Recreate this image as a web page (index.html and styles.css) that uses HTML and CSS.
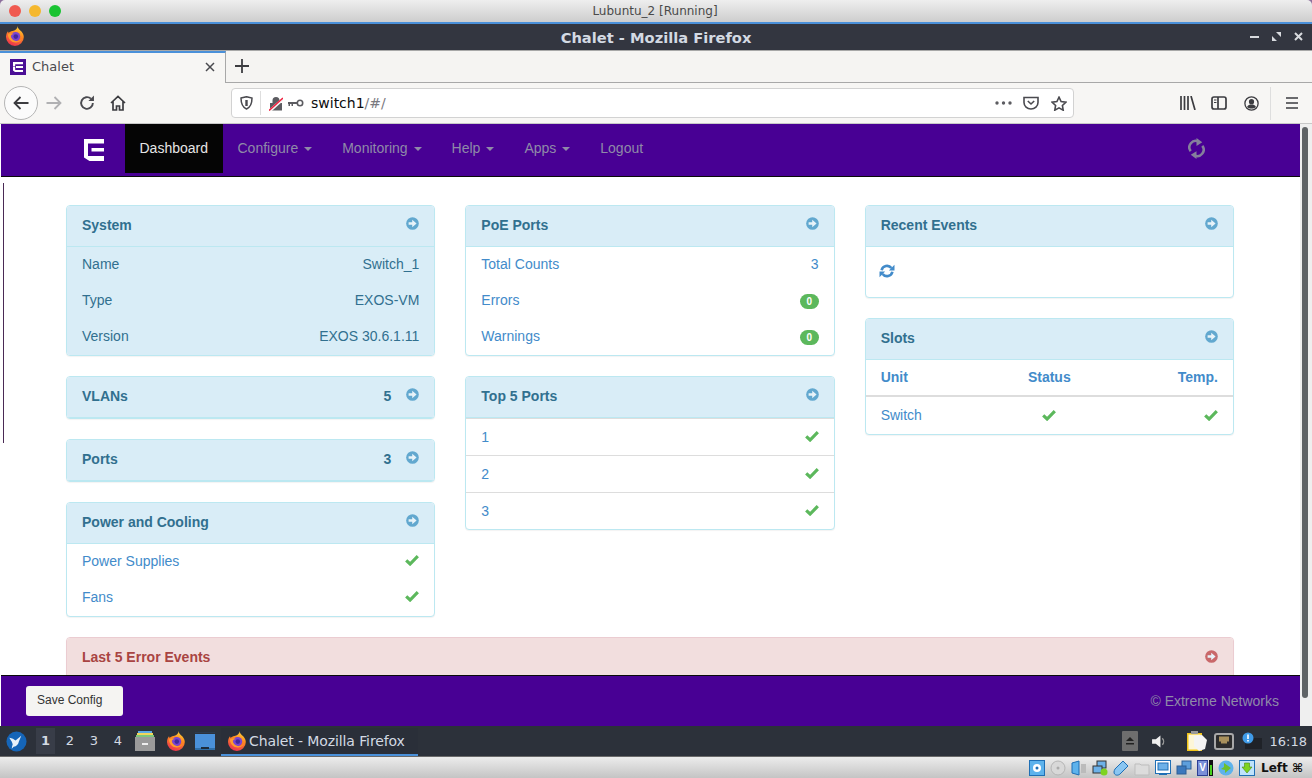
FILE: index.html
```html
<!DOCTYPE html>
<html lang="en">
<head>
  <meta charset="UTF-8" />
  <title>Chalet - Mozilla Firefox</title>
  <link rel="stylesheet" href="styles.css">
</head>
<body>
  <svg class="defs" width="0" height="0">
    <defs>
      <linearGradient id="fxBody" x1="0.7" y1="0" x2="0.3" y2="1">
        <stop offset="0" stop-color="#ffd83b"/>
        <stop offset="0.4" stop-color="#ff8a1f"/>
        <stop offset="1" stop-color="#ec2f52"/>
      </linearGradient>
      <symbol id="firefox" viewBox="0 0 20 20">
        <path d="M12.800 0c-.2 1.800.8 3 2.200 4.300 2.100 1.700 3.800 3.900 3.800 6.700a8.900 8.900 0 1 1-17.800 0c0-2.300.8-4.300 2-5.800l.6 1.900c1-1.300 2.300-1.800 3.800-2.100 2.600-.6 5-1.900 5.400-5z" fill="url(#fxBody)"/>
        <circle cx="10.600" cy="10.600" r="4.600" fill="#7a45cf"/>
        <circle cx="10.800" cy="10.600" r="2.300" fill="#43289e"/>
        <path d="M2.800 8.500c.6 5 4 8.200 8.400 8 2.600-.1 4.800-1.600 5.800-3.900-1.600 1.900-4 2.900-6.300 2.500-3-.5-4.900-2.800-5-5.500.6-1 1.700-1.600 3-1.700-1.800-.9-4.700-.4-5.900.6z" fill="#ff9c2e"/>
      </symbol>
      <symbol id="go" viewBox="0 0 14 14">
        <circle cx="7" cy="7" r="6.800" fill="currentColor"/>
        <path d="M2.800 5.600h3.900V3L11.400 7l-4.700 4V8.400H2.800z" fill="#e8f3f9"/>
      </symbol>
      <symbol id="ok" viewBox="0 0 14 11">
        <path d="M1.200 5.400l3.900 3.600 7.700-7.800" fill="none" stroke="currentColor" stroke-width="3.200"/>
      </symbol>
      <symbol id="spin" viewBox="0 0 16 14">
        <path d="M2.600 6.200a5.500 5.500 0 0 1 9.800-2.100" fill="none" stroke="currentColor" stroke-width="2.600"/>
        <path d="M15.500 0.800v5.600H9.900z" fill="currentColor"/>
        <path d="M13.400 7.800a5.500 5.500 0 0 1-9.800 2.100" fill="none" stroke="currentColor" stroke-width="2.600"/>
        <path d="M.5 13.200V7.600h5.600z" fill="currentColor"/>
      </symbol>
      <symbol id="extreme" viewBox="0 0 20 22">
        <path d="M0 0h20v4.500H4v5H0z M7.500 9h12.500v3.600H7.500z M0 9.500h4v7.500h16v5H5.500L0 18.500z" fill="currentColor"/>
      </symbol>
    </defs>
  </svg>

  <div class="window">
    <div class="titlebar">
      <div class="lights">
        <span class="light red"></span>
        <span class="light amber"></span>
        <span class="light green"></span>
      </div>
      <span>Lubuntu_2 [Running]</span>
    </div>

    <div class="wmbar">
      <svg class="wm-logo"><use href="#firefox"/></svg>
      <span class="wm-title">Chalet - Mozilla Firefox</span>
      <div class="wm-btns">
        <svg width="9" height="9" viewBox="0 0 9 9"><path d="M0 4h9v2H0z" fill="#d8dade"/></svg>
        <svg width="9" height="9" viewBox="0 0 9 9"><path d="M4 0h5v5z M0 4l5 5H0z" fill="#d8dade"/></svg>
        <svg width="9" height="9" viewBox="0 0 9 9"><path d="M1 1l7 7M8 1L1 8" stroke="#d8dade" stroke-width="2"/></svg>
      </div>
    </div>

    <div class="tabbar">
      <div class="tab">
        <svg class="favicon" viewBox="0 0 16 16"><rect width="16" height="16" fill="#4b0f96"/><path d="M3 3h10v2.200H5.200V7H3z M6 7h7v2H6z M3 7.500h2.200V11H13v2H5l-2-1.600z" fill="#fff"/></svg>
        <span class="tab-label">Chalet</span>
        <svg class="tab-close" width="10" height="10" viewBox="0 0 10 10"><path d="M1 1l8 8M9 1L1 9" stroke="#4a4a4f" stroke-width="1.500"/></svg>
      </div>
      <div class="newtab">
        <svg width="14" height="14" viewBox="0 0 14 14"><path d="M7 0v14M0 7h14" stroke="#3c3c40" stroke-width="1.800"/></svg>
      </div>
    </div>

    <div class="toolbar">
      <div class="backbtn">
        <svg width="16" height="14" viewBox="0 0 16 14"><path d="M15.500 7H2M7.500 1L1.500 7l6 6" fill="none" stroke="#3c3c40" stroke-width="1.800"/></svg>
      </div>
      <svg class="tb-forward" width="16" height="14" viewBox="0 0 16 14"><path d="M.5 7H14M8.500 1l6 6-6 6" fill="none" stroke="#b1b1b3" stroke-width="1.800"/></svg>
      <svg class="tb-reload" width="16" height="16" viewBox="0 0 15 15"><path d="M13 7.500a5.500 5.500 0 1 1-1.800-4.100" fill="none" stroke="#4a4a4f" stroke-width="1.800"/><path d="M14 .5v5.200H8.800z" fill="#4a4a4f"/></svg>
      <svg class="tb-home" width="16" height="16" viewBox="0 0 16 16"><path d="M1 8l7-6.500L15 8M3 6.500V15h3.500v-4h3v4H13V6.500" fill="none" stroke="#3c3c40" stroke-width="1.700"/></svg>

      <div class="urlbar">
        <svg class="url-shield" width="13" height="14" viewBox="0 0 13 14"><path d="M1 2l5.500-1.300L12 2c0 5-1 9-5.500 11C2 11 1 7 1 2z" fill="none" stroke="#4a4a4f" stroke-width="1.500"/><path d="M6.500 4v6" stroke="#4a4a4f" stroke-width="2.400"/></svg>
        <span class="url-sep"></span>
        <svg class="url-lock" width="14" height="15" viewBox="0 0 14 15"><path d="M3.500 7V4.500a3.500 3.500 0 0 1 7 0V7H13v7.500H1V7z" fill="#5c5c61"/><path d="M0 15.500L14 3" stroke="#f7f6f4" stroke-width="3"/><path d="M0 14.500L14 2" stroke="#f0203f" stroke-width="1.500"/></svg>
        <svg class="url-key" width="16" height="8" viewBox="0 0 16 8"><circle cx="12" cy="4" r="2.700" fill="none" stroke="#5c5c61" stroke-width="1.600"/><path d="M0 3h9v2H5v2H3.500V5H2v2H.5V5H0z" fill="#5c5c61"/></svg>
        <span class="url-text">switch1<span class="url-dim">/#/</span></span>
        <svg class="url-dots" width="17" height="4" viewBox="0 0 17 4"><circle cx="2" cy="2" r="1.700" fill="#5c5c61"/><circle cx="8.500" cy="2" r="1.700" fill="#5c5c61"/><circle cx="15" cy="2" r="1.700" fill="#5c5c61"/></svg>
        <svg class="url-pocket" width="16" height="14" viewBox="0 0 16 14"><path d="M1 1.500h14v5a7 6.500 0 0 1-14 0z" fill="none" stroke="#4a4a4f" stroke-width="1.600"/><path d="M4.800 5l3.200 3 3.200-3" fill="none" stroke="#4a4a4f" stroke-width="1.600"/></svg>
        <svg class="url-star" width="16" height="15" viewBox="0 0 16 15"><path d="M8 1.200l2.100 4.300 4.700.7-3.400 3.300.8 4.700L8 11.900l-4.200 2.300.8-4.700L1.200 6.200l4.700-.7z" fill="none" stroke="#4a4a4f" stroke-width="1.600"/></svg>
      </div>

      <div class="tb-right">
        <svg class="tb-library" width="16" height="14" viewBox="0 0 16 14"><path d="M1 0v14M4.500 0v14M8 0v14M11 0l4 14" fill="none" stroke="#3c3c40" stroke-width="1.700"/></svg>
        <svg class="tb-sidebar" width="16" height="14" viewBox="0 0 16 14"><rect x="1" y="1" width="14" height="12" rx="2" fill="none" stroke="#3c3c40" stroke-width="1.700"/><path d="M7 1v12" stroke="#3c3c40" stroke-width="1.700"/><path d="M3 4h2.500M3 6.500h2.500" stroke="#3c3c40" stroke-width="1"/></svg>
        <svg class="tb-profile" width="15" height="15" viewBox="0 0 15 15"><circle cx="7.500" cy="7.500" r="6.600" fill="none" stroke="#3c3c40" stroke-width="1.300"/><circle cx="7.500" cy="5.700" r="2.600" fill="#3c3c40"/><path d="M3 11c1-2 2.500-2.500 4.500-2.500S11 9 12 11c-2.500 2-6.500 2-9 0z" fill="#3c3c40"/></svg>
        <span class="tb-sep"></span>
        <svg width="12" height="12" viewBox="0 0 12 12"><path d="M0 1h12M0 6h12M0 11h12" stroke="#3c3c40" stroke-width="1.700"/></svg>
      </div>
    </div>

    <div class="app">
      <div class="page">
        <nav class="appnav">
          <svg class="appnav-logo"><use href="#extreme"/></svg>
          <ul class="appnav-menu">
            <li class="active">Dashboard</li>
            <li>Configure<i class="caret"></i></li>
            <li>Monitoring<i class="caret"></i></li>
            <li>Help<i class="caret"></i></li>
            <li>Apps<i class="caret"></i></li>
            <li>Logout</li>
          </ul>
          <svg class="appnav-sync" viewBox="0 0 16 20"><path d="M2.500 12.500A6 6 0 0 1 10 3.500" fill="none" stroke="currentColor" stroke-width="2.400"/><path d="M8 0l5.500 4L8 7.500z" fill="currentColor"/><path d="M13.500 7.500A6 6 0 0 1 6 16.500" fill="none" stroke="currentColor" stroke-width="2.400"/><path d="M8 20l-5.500-4L8 12.500z" fill="currentColor"/></svg>
        </nav>

        <main class="dash">
          <span class="edge-line"></span>
          <div class="dash-grid">
            <div class="col">
              <section class="panel">
                <header class="panel-head"><h3>System</h3><svg class="go"><use href="#go"/></svg></header>
                <div class="panel-body info">
                  <div class="row"><span>Name</span><span>Switch_1</span></div>
                  <div class="row"><span>Type</span><span>EXOS-VM</span></div>
                  <div class="row"><span>Version</span><span>EXOS 30.6.1.11</span></div>
                </div>
              </section>
              <section class="panel">
                <header class="panel-head"><h3>VLANs</h3><b class="count">5</b><svg class="go"><use href="#go"/></svg></header>
              </section>
              <section class="panel">
                <header class="panel-head"><h3>Ports</h3><b class="count">3</b><svg class="go"><use href="#go"/></svg></header>
              </section>
              <section class="panel">
                <header class="panel-head"><h3>Power and Cooling</h3><svg class="go"><use href="#go"/></svg></header>
                <div class="panel-body">
                  <div class="row"><span>Power Supplies</span><svg class="ok"><use href="#ok"/></svg></div>
                  <div class="row"><span>Fans</span><svg class="ok"><use href="#ok"/></svg></div>
                </div>
              </section>
            </div>

            <div class="col">
              <section class="panel">
                <header class="panel-head"><h3>PoE Ports</h3><svg class="go"><use href="#go"/></svg></header>
                <div class="panel-body">
                  <div class="row"><span>Total Counts</span><span>3</span></div>
                  <div class="row"><span>Errors</span><span class="badge">0</span></div>
                  <div class="row"><span>Warnings</span><span class="badge">0</span></div>
                </div>
              </section>
              <section class="panel">
                <header class="panel-head"><h3>Top 5 Ports</h3><svg class="go"><use href="#go"/></svg></header>
                <div class="list-row"><span>1</span><svg class="ok"><use href="#ok"/></svg></div>
                <div class="list-row"><span>2</span><svg class="ok"><use href="#ok"/></svg></div>
                <div class="list-row"><span>3</span><svg class="ok"><use href="#ok"/></svg></div>
              </section>
            </div>

            <div class="col">
              <section class="panel">
                <header class="panel-head"><h3>Recent Events</h3><svg class="go"><use href="#go"/></svg></header>
                <div class="events"><svg class="spin"><use href="#spin"/></svg></div>
              </section>
              <section class="panel">
                <header class="panel-head"><h3>Slots</h3><svg class="go"><use href="#go"/></svg></header>
                <div class="slots slots-head"><span>Unit</span><span>Status</span><span>Temp.</span></div>
                <div class="slots"><span>Switch</span><span><svg class="ok"><use href="#ok"/></svg></span><span><svg class="ok"><use href="#ok"/></svg></span></div>
              </section>
            </div>
          </div>

          <section class="panel danger">
            <header class="panel-head"><h3>Last 5 Error Events</h3><svg class="go"><use href="#go"/></svg></header>
          </section>
        </main>

        <footer class="appfoot">
          <button class="save">Save Config</button>
          <span class="copy">© Extreme Networks</span>
        </footer>
      </div>
      <div class="scroll"><span class="scroll-thumb"></span></div>
    </div>

    <div class="taskbar">
      <svg class="tk-start" viewBox="0 0 22 22"><circle cx="11" cy="11" r="10.500" fill="#1565b8"/><path d="M3.500 7c3 .5 5 1.500 6.500 3l6-5-2.500 6c-.5 3-2.500 5-5.500 5.500l-2 2 .5-3C8 14 6 11 3.500 7z" fill="#e8f1fa"/></svg>
      <span class="desk current">1</span>
      <span class="desk">2</span>
      <span class="desk">3</span>
      <span class="desk">4</span>
      <svg class="tk-files" viewBox="0 0 20 20"><path d="M3 0h14v2H3z" fill="#5aa9e6"/><path d="M2 2h16v2H2z" fill="#f1d65b"/><path d="M1 4h18v2H1z" fill="#7cc67c"/><path d="M0 6h20v14H0z" fill="#9a9a9a"/><path d="M7 12h6v2H7z" fill="#eee"/></svg>
      <svg class="tk-fox"><use href="#firefox"/></svg>
      <svg class="tk-desk" viewBox="0 0 20 18"><path d="M0 0h20v1H0z" fill="#2c3a4d"/><path d="M0 2h20v14H0z" fill="#4a90d9"/><path d="M0 16h20v2H0z" fill="#2f6ea8"/><path d="M6 15h8v2H6z" fill="#1d2a3a"/></svg>
      <div class="tk-task">
        <svg class="tk-fox"><use href="#firefox"/></svg>
        <span>Chalet - Mozilla Firefox</span>
      </div>
      <div class="tk-tray">
        <svg class="tray-eject" viewBox="0 0 16 20"><rect width="16" height="20" rx="1" fill="#6e6e6e"/><path d="M8 6l4 4H4z M4 12h8v1.500H4z" fill="#222"/></svg>
        <svg class="tray-vol" viewBox="0 0 16 14"><path d="M0 4.500h4L9 .5v13l-5-4H0z" fill="#f0f0f0"/><path d="M11 3.500a5 5 0 0 1 0 7" fill="none" stroke="#999" stroke-width="1.500"/></svg>
        <svg class="tray-clip" viewBox="0 0 20 20"><rect x="0" y="2" width="15" height="18" fill="#f0c419"/><rect x="1.500" y="3.500" width="12" height="15" fill="#fdf6d8"/><rect x="4" y="0" width="7" height="3" fill="#999"/><path d="M7 5l8-1 5 5-2 9-6 2-5-5z" fill="#f4f4f4"/></svg>
        <svg class="tray-net" viewBox="0 0 20 17"><rect x="1" y="1" width="18" height="15" rx="2" fill="#2c2c2c" stroke="#a8a8a8" stroke-width="2"/><path d="M5 3.500h10v5h-2v2H7v-2H5z" fill="#a8905c"/></svg>
        <svg class="tray-note" viewBox="0 0 20 18"><rect x="3" y="6" width="17" height="11" fill="#1f2228"/><circle cx="6" cy="6" r="5.500" fill="#3f9be8"/><path d="M5.200 2.500h1.600v4.500H5.200z M5.200 8h1.600v1.500H5.200z" fill="#fff"/></svg>
        <span class="clock">16:18</span>
      </div>
    </div>

    <div class="vboxbar">
      <svg class="vb" viewBox="0 0 16 16"><rect x=".5" y=".5" width="15" height="15" fill="#5db2ec" stroke="#1f6fb5"/><circle cx="8" cy="8" r="4" fill="#fff"/><circle cx="8" cy="8" r="1.500" fill="#1f6fb5"/></svg>
      <svg class="vb" viewBox="0 0 16 16"><circle cx="8" cy="8" r="7" fill="#d8d8d8" stroke="#b5b5b5"/><circle cx="8" cy="8" r="1.500" fill="#aaa"/></svg>
      <svg class="vb" viewBox="0 0 16 16"><path d="M1 3l7-2v14l-7-2z" fill="#5db2ec" stroke="#1f6fb5"/><path d="M10 4h5v9h-5z" fill="#bbb"/></svg>
      <svg class="vb" viewBox="0 0 16 16"><rect x="5" y="1" width="9" height="7" fill="#6db1e8" stroke="#333"/><rect x="1" y="6" width="9" height="7" fill="#6db1e8" stroke="#333"/><circle cx="12" cy="12" r="3.500" fill="#7ed321"/></svg>
      <svg class="vb" viewBox="0 0 16 16"><path d="M10 1l5 5-8 8c-2 2-6 1.500-6-2 0-1 .5-2 1-3z" fill="#8ac6f2" stroke="#1f6fb5"/></svg>
      <svg class="vb" viewBox="0 0 16 16"><path d="M1 4h5l1 1h8v10H1z" fill="#dcdcdc" stroke="#bdbdbd"/></svg>
      <svg class="vb" viewBox="0 0 16 16"><rect x=".5" y=".5" width="15" height="13" fill="#fff" stroke="#1f6fb5"/><rect x="3" y="3" width="10" height="7" fill="#6db1e8" stroke="#1f6fb5"/><path d="M4 14.500h8" stroke="#1f6fb5"/></svg>
      <svg class="vb" viewBox="0 0 16 16"><rect x="6" y="1" width="9" height="8" fill="#5e9fdc" stroke="#2c5f96"/><rect x="1" y="6" width="9" height="8" fill="#3b78bd" stroke="#2c5f96"/></svg>
      <span class="vb-v"><span class="vb-v-in">V</span><i></i></span>
      <svg class="vb" viewBox="0 0 16 16"><circle cx="8" cy="8" r="7.500" fill="#5db2ec"/><path d="M6 3l7 5-6 5V10L3 9l3-2z" fill="#6ec02c"/></svg>
      <svg class="vb" viewBox="0 0 16 16"><rect x=".5" y=".5" width="15" height="15" fill="#bfe3fb" stroke="#1f6fb5"/><path d="M5.500 3h5v4H13l-5 6-5-6h2.500z" fill="#7ed321" stroke="#4a8a10" stroke-width=".6"/></svg>
      <span class="vb-key">Left ⌘</span>
    </div>
  </div>
</body>
</html>
```

FILE: styles.css
```css
* {
  box-sizing: border-box;
}
html, body {
  margin: 0;
  height: 100%;
  overflow: hidden;
}
body {
  background-color: #8c6f9c;
  font-family: "Liberation Sans", Arial, sans-serif;
  font-size: 14px;
}
.defs {
  position: absolute;
}
.window {
  display: flex;
  flex-direction: column;
  width: 1312px;
  height: 778px;
  overflow: hidden;
  border-radius: 5px 5px 0 0;
}

/* host title bar */
.titlebar {
  position: relative;
  display: flex;
  align-items: center;
  justify-content: center;
  flex: 0 0 22px;
  padding-right: 2px;
  background: linear-gradient(#eeeeee, #cdcdcd);
  color: #4a4a4a;
  font-family: "DejaVu Sans", sans-serif;
  font-size: 12px;
}
.lights {
  position: absolute;
  left: 9px;
  top: 5px;
  display: flex;
  gap: 8px;
}
.light {
  width: 12px;
  height: 12px;
  border-radius: 50%;
}
.light.red { background-color: #f05a50; }
.light.amber { background-color: #f5b82e; }
.light.green { background-color: #19c332; }

/* guest window bar */
.wmbar {
  position: relative;
  display: flex;
  align-items: center;
  justify-content: center;
  flex: 0 0 28px;
  background-color: #333640;
  border-top: 2px solid #4a90d9;
  color: #d3dae3;
}
.wm-logo {
  position: absolute;
  left: 5px;
  top: 2px;
  width: 20px;
  height: 20px;
}
.wm-title {
  font-family: "DejaVu Sans", sans-serif;
  font-weight: 700;
  font-size: 14.670px;
}
.wm-btns {
  position: absolute;
  right: 9px;
  top: 8px;
  display: flex;
  gap: 13px;
}

/* firefox chrome */
.tabbar {
  display: flex;
  flex: 0 0 33px;
  background-color: #f5f4f2;
  border-top: 1px solid #a8a8a8;
  border-bottom: 1px solid #a8a8a8;
}
.tab {
  display: flex;
  align-items: center;
  width: 226px;
  height: 32px;
  margin-bottom: -1px;
  padding: 0 10px 2px;
  background-color: #f7f6f4;
  border-top: 2px solid #4a90d9;
  border-right: 1px solid #a8a8a8;
}
.favicon {
  width: 16px;
  height: 16px;
  margin-right: 6px;
}
.tab-label {
  flex: 1;
  margin-bottom: 2px;
  color: #4a4a4f;
  font-family: "DejaVu Sans", sans-serif;
  font-size: 13px;
}
.newtab {
  display: flex;
  align-items: center;
  height: 30px;
  padding-left: 9px;
}
.toolbar {
  display: flex;
  align-items: center;
  flex: 0 0 41px;
  padding-left: 4px;
  background-color: #f7f6f4;
  border-bottom: 1px solid #c8c8c8;
}
.backbtn {
  display: flex;
  align-items: center;
  justify-content: center;
  width: 34px;
  height: 34px;
  border: 1px solid #b5b5b5;
  border-radius: 50%;
  background-color: #fbfbfb;
}
.tb-forward {
  margin-left: 8px;
}
.tb-reload {
  margin-left: 17px;
}
.tb-home {
  margin-left: 15px;
}
.urlbar {
  display: flex;
  align-items: center;
  width: 843px;
  height: 30px;
  margin-left: 105px;
  padding: 0 6px 0 8px;
  background-color: #fff;
  border: 1px solid #d2d2d2;
  border-radius: 4px;
  color: #0c0c0d;
  font-family: "DejaVu Sans", sans-serif;
  font-size: 14px;
}
.url-sep {
  width: 1px;
  height: 24px;
  margin: 0 8px 0 7px;
  background-color: #dedede;
}
.url-key {
  margin: 0 7px 0 5px;
}
.url-text {
  flex: 1;
  margin-bottom: 1px;
}
.url-dim {
  color: #7a7a7f;
}
.url-dots {
  margin-right: 11px;
}
.url-pocket {
  margin-right: 12px;
}
.tb-right {
  display: flex;
  align-items: center;
  margin-left: 106px;
}
.tb-sidebar {
  margin-left: 15px;
}
.tb-profile {
  margin-left: 17px;
}
.tb-sep {
  width: 1px;
  height: 33px;
  margin: 0 15px 0 11px;
  background-color: #dedede;
}

/* app area */
.app {
  display: flex;
  flex: 1;
  min-height: 0;
  padding-left: 1px;
  background-color: #fff;
}
.page {
  display: flex;
  flex-direction: column;
  flex: 1;
  min-width: 0;
}
.scroll {
  flex: 0 0 12px;
  padding: 3px 0 0 2px;
  background-color: #efefef;
}
.scroll-thumb {
  display: block;
  width: 6px;
  height: 571px;
  border-radius: 3px;
  background-color: #5f6366;
}
.appnav {
  display: flex;
  align-items: flex-start;
  flex: 0 0 53px;
  background-color: #480094;
  border-bottom: 1px solid #0a0a0a;
  color: #fff;
}
.appnav-logo {
  flex: none;
  width: 20px;
  height: 22px;
  margin: 15px 21px 0 83px;
  color: #fff;
}
.appnav-menu {
  display: flex;
  margin: 0;
  padding: 0;
  list-style: none;
}
.appnav-menu li {
  height: 49px;
  padding: 0 15px;
  color: #8f8aa8;
  line-height: 48px;
}
.appnav-menu li.active {
  padding: 0 14.500px;
  background-color: #050505;
  color: #e6e6e6;
}
.caret {
  display: inline-block;
  margin-left: 6px;
  vertical-align: middle;
  border-top: 4px solid #8f8aa8;
  border-left: 4px solid transparent;
  border-right: 4px solid transparent;
}
.appnav-sync {
  width: 17px;
  height: 21px;
  margin: 14px 95px 0 auto;
  color: #85809c;
}
.dash {
  position: relative;
  flex: 1;
  min-height: 0;
  overflow: hidden;
  padding: 28px 66px 0 65px;
}
.edge-line {
  position: absolute;
  left: 2px;
  top: 6px;
  width: 1px;
  height: 260px;
  background-color: #4a2a55;
}
.dash-grid {
  display: grid;
  grid-template-columns: repeat(3, 1fr);
  gap: 30px;
  height: 412px;
  margin-bottom: 20px;
}
.col {
  display: flex;
  flex-direction: column;
  gap: 20px;
}

/* panels */
.panel {
  border: 1px solid #bce8f1;
  border-radius: 4px;
  background-color: #fff;
  box-shadow: 0 1px 1px rgba(0, 0, 0, 0.05);
  color: #428bca;
  overflow: hidden;
}
.panel-head {
  display: flex;
  align-items: center;
  height: 41px;
  padding: 0 15px 3px;
  background-color: #d9edf7;
  border-bottom: 1px solid #bce8f1;
  color: #31708f;
}
.panel-head h3 {
  flex: 1;
  margin: 0;
  font-size: 14px;
  font-weight: 700;
}
.count {
  margin-right: 15px;
}
.go {
  width: 13px;
  height: 13px;
  margin-top: -2px;
  color: #62a8cf;
}
.panel-body {
  display: flex;
  flex-direction: column;
}
.panel-body.info {
  background-color: #d9edf7;
  color: #31708f;
}
.row {
  display: flex;
  align-items: center;
  justify-content: space-between;
  height: 36px;
  padding: 0 15px 3px;
}
.ok {
  width: 14px;
  height: 11px;
  color: #5cb85c;
}
.badge {
  min-width: 19px;
  margin-top: 4px;
  padding: 2px 5px;
  border-radius: 10px;
  background-color: #5cb85c;
  color: #fff;
  font-size: 10px;
  font-weight: 700;
  line-height: 11px;
  text-align: center;
}
.list-row {
  display: flex;
  align-items: center;
  justify-content: space-between;
  height: 37px;
  padding: 0 15px 1px;
  border-top: 1px solid #dddddd;
}
.events {
  height: 50px;
  padding: 17px 13px 0;
}
.spin {
  display: block;
  width: 16px;
  height: 14px;
  color: #428bca;
}
.slots {
  display: grid;
  grid-template-columns: 1fr 1fr 1fr;
  align-items: center;
  height: 37px;
  padding: 0 15px 2px;
}
.slots span:nth-child(2) {
  text-align: center;
}
.slots span:nth-child(3) {
  text-align: right;
}
.slots .ok {
  display: inline-block;
  vertical-align: middle;
}
.slots-head {
  border-bottom: 2px solid #dddddd;
  font-weight: 700;
}
.panel.danger {
  border-color: #ebccd1;
}
.danger .panel-head {
  background-color: #f2dede;
  border-bottom: none;
  color: #a94442;
}
.danger .go {
  color: #c9686a;
}

/* app footer */
.appfoot {
  display: flex;
  align-items: center;
  justify-content: space-between;
  flex: 0 0 51px;
  padding: 0 21px 0 25px;
  background-color: #480094;
  border-top: 1px solid #0a0a0a;
}
.save {
  width: 97px;
  height: 30px;
  padding: 0 0 2px 11px;
  border: none;
  border-radius: 3px;
  background-color: #f5f4f2;
  color: #333;
  font-family: "Liberation Sans", Arial, sans-serif;
  font-size: 12px;
  text-align: left;
}
.copy {
  color: #8f8aa8;
}

/* guest panel */
.taskbar {
  display: flex;
  align-items: center;
  flex: 0 0 30px;
  padding-left: 6px;
  background-color: #2c313a;
  color: #d3dae3;
  font-family: "DejaVu Sans", sans-serif;
  font-size: 13px;
}
.tk-start {
  width: 21px;
  height: 21px;
  margin-right: 9px;
}
.desk {
  width: 24px;
  height: 26px;
  line-height: 26px;
  text-align: center;
}
.desk.current {
  width: 19px;
  margin-right: 3px;
  background-color: #383d48;
  font-weight: 700;
}
.tk-files {
  width: 20px;
  height: 20px;
  margin: 0 11px 0 5px;
}
.tk-fox {
  flex: none;
  width: 20px;
  height: 20px;
}
.tk-desk {
  width: 20px;
  height: 18px;
  margin: 0 6px 0 9px;
}
.tk-task {
  display: flex;
  align-items: center;
  gap: 2px;
  flex: none;
  width: 197px;
  height: 28px;
  margin-top: 1px;
  padding-left: 6px;
  background-color: #2a2f39;
  border-bottom: 2px solid #4a90d9;
  font-size: 14px;
  letter-spacing: -0.1px;
}
.tk-tray {
  display: flex;
  align-items: center;
  margin-left: auto;
  padding-right: 5px;
}
.tray-eject {
  width: 16px;
  height: 20px;
  margin-right: 14px;
}
.tray-vol {
  width: 15px;
  height: 13px;
  margin-right: 20px;
}
.tray-clip {
  width: 20px;
  height: 20px;
  margin-right: 7px;
}
.tray-net {
  width: 20px;
  height: 17px;
  margin-right: 8px;
}
.tray-note {
  width: 20px;
  height: 18px;
  margin-right: 8px;
}
.vboxbar {
  display: flex;
  align-items: center;
  gap: 5px;
  flex: 0 0 22px;
  padding-left: 1029px;
  background: linear-gradient(#ececec, #c4c4c4);
  border-top: 1px solid #6a6a6a;
}
.vb {
  flex: none;
  width: 16px;
  height: 16px;
}
.vb-v {
  display: flex;
  align-items: stretch;
  gap: 1px;
  width: 16px;
  height: 16px;
}
.vb-v-in {
  width: 11px;
  background-color: #7a8fd8;
  border: 1px solid #2c3f96;
  color: #fff;
  font-size: 10px;
  font-weight: 700;
  line-height: 14px;
  text-align: center;
}
.vb-v i {
  width: 4px;
  background: linear-gradient(#111 30%, #46d21e 30%);
  border: 1px solid #111;
}
.vb-key {
  margin-left: 1px;
  color: #111;
  font-family: "DejaVu Sans", sans-serif;
  font-size: 12px;
  font-weight: 700;
}
```
